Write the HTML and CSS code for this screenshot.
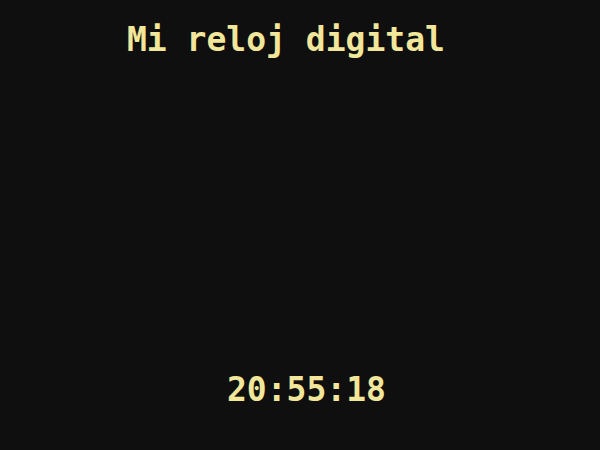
FILE: index.html
```html
<!DOCTYPE html>
<html lang="es">
<head>
<meta charset="utf-8">
<title>Mi reloj digital</title>
<link rel="stylesheet" href="styles.css">
</head>
<body>
<div class="page">
  <h1 class="title">Mi reloj digital</h1>
  <div class="clock">20:55:18</div>
</div>
</body>
</html>
```
FILE: styles.css
```css
html, body {
  margin: 0;
  padding: 0;
  background: #0f0f0f;
}
.page {
  width: 600px;
  height: 450px;
  display: flex;
  flex-direction: column;
  font-family: "DejaVu Sans Mono", monospace;
  font-weight: bold;
  color: #f2e69a;
}
.title {
  margin: 0;
  padding: 21px 0 0 127px;
  font-size: 33px;
  line-height: 38px;
  font-weight: bold;
}
.clock {
  margin-top: auto;
  padding: 0 0 41px 227px;
  font-size: 33px;
  line-height: 38px;
}
```
